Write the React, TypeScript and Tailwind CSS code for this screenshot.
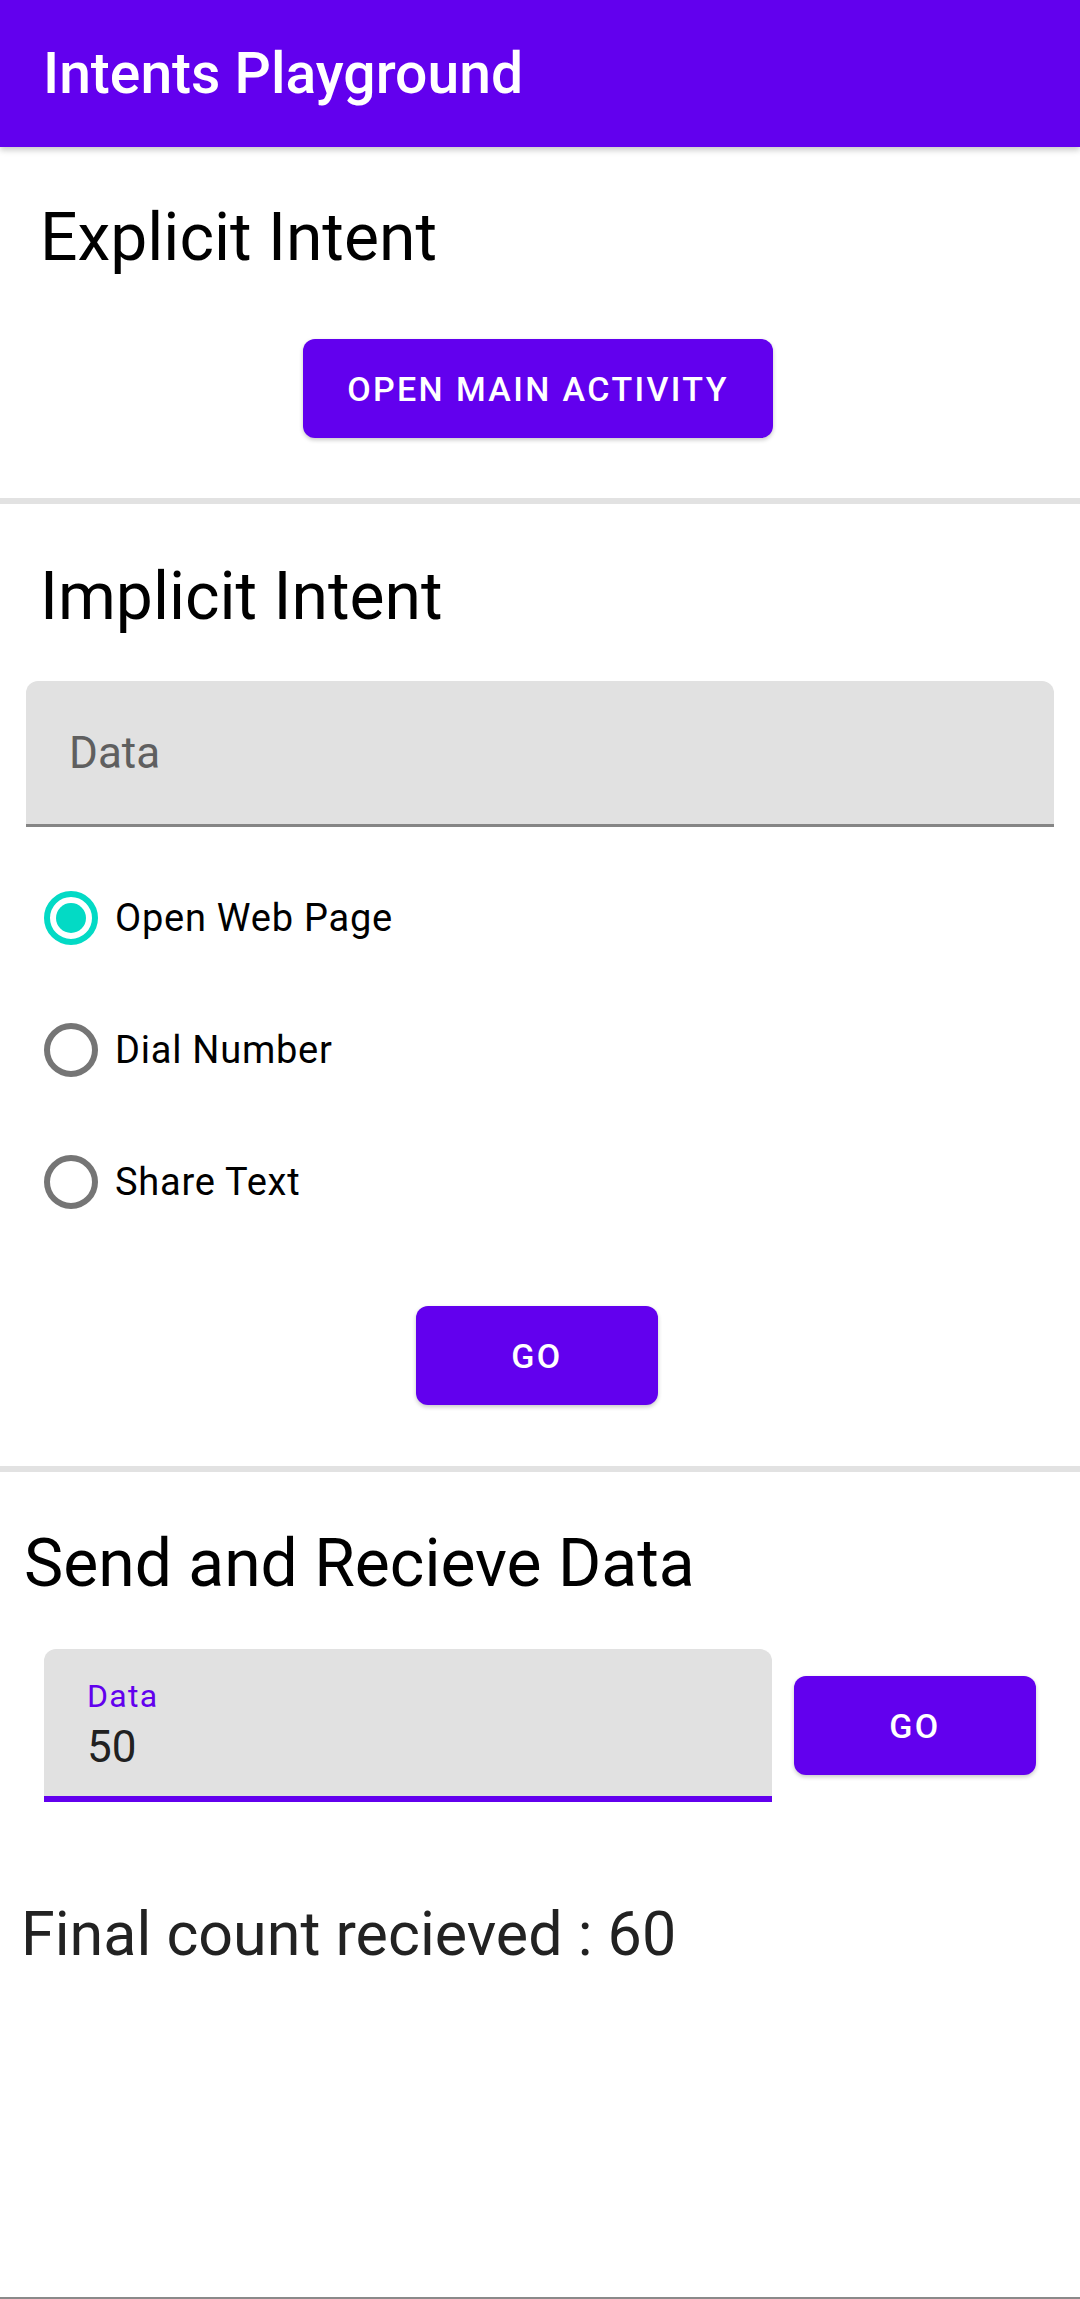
import React from "react";

const font = { fontFamily: "Roboto, 'Noto Sans', sans-serif" };

function Radio({ checked }: { checked: boolean }) {
  return (
    <svg width="54" height="54" viewBox="0 0 54 54" className="shrink-0">
      <circle
        cx="27"
        cy="27"
        r="24"
        fill="none"
        stroke={checked ? "#03dac5" : "#757575"}
        strokeWidth="6"
      />
      {checked && <circle cx="27" cy="27" r="15" fill="#03dac5" />}
    </svg>
  );
}

function PurpleButton({ label, className }: { label: string; className: string }) {
  return (
    <div
      className={
        "flex items-center justify-center rounded-[12px] bg-[#6200ee] text-white text-[34px] leading-[40px] font-medium tracking-[0.07em] shadow-[0_2px_4px_rgba(0,0,0,0.22)] " +
        className
      }
    >
      {label}
    </div>
  );
}

export default function App() {
  const radios = [
    { label: "Open Web Page", checked: true },
    { label: "Dial Number", checked: false },
    { label: "Share Text", checked: false },
  ];
  return (
    <div className="w-[1080px] h-[2299px] bg-white flex flex-col" style={font}>
      {/* App bar */}
      <div className="relative z-10 h-[147px] shrink-0 bg-[#6200ee] flex items-center pl-[43px] shadow-[0_3px_6px_rgba(0,0,0,0.22)]">
        <span className="text-white text-[57px] leading-[66px] font-medium">Intents Playground</span>
      </div>

      {/* Explicit */}
      <div className="pl-[40px] mt-[52px] text-[66px] leading-[78px] text-black">Explicit Intent</div>
      <div className="flex justify-center pr-[4px] mt-[62px]">
        <PurpleButton label="OPEN MAIN ACTIVITY" className="w-[470px] h-[99px]" />
      </div>

      <div className="mt-[60px] h-[6px] bg-[#e2e2e2]" />

      {/* Implicit */}
      <div className="pl-[40px] mt-[54px] text-[66px] leading-[78px] text-black">Implicit Intent</div>
      <div className="mx-[26px] mt-[45px] h-[146px] rounded-t-[12px] bg-[#e1e1e1] border-b-[3px] border-[#858585] flex items-center pl-[43px]">
        <span className="text-[44px] leading-[52px] text-[#5f5f5f]">Data</span>
      </div>

      <div className="mt-[25px] flex flex-col">
        {radios.map((r) => (
          <div key={r.label} className="h-[132px] flex items-center pl-[44px] gap-[17px]">
            <Radio checked={r.checked} />
            <span className="text-[38px] leading-[44px] tracking-[0.02em] text-black">{r.label}</span>
          </div>
        ))}
      </div>

      <div className="flex justify-center pr-[6px] mt-[58px]">
        <PurpleButton label="GO" className="w-[242px] h-[99px]" />
      </div>

      <div className="mt-[61px] h-[6px] bg-[#e2e2e2]" />

      {/* Send and receive */}
      <div className="pl-[24px] mt-[53px] text-[66px] leading-[78px] text-black">Send and Recieve Data</div>
      <div className="mt-[46px] px-[44px] flex items-center gap-[22px]">
        <div className="flex-1 h-[153px] rounded-t-[12px] bg-[#e1e1e1] border-b-[6px] border-[#6200ee] pt-[28px] pl-[43px] flex flex-col">
          <span className="text-[32px] leading-[38px] tracking-[0.04em] text-[#6200ee]">Data</span>
          <span className="mt-[6px] text-[44px] leading-[52px] text-[#212121]">50</span>
        </div>
        <PurpleButton label="GO" className="w-[242px] h-[99px] shrink-0" />
      </div>

      <div className="pl-[21px] mt-[97px] text-[61px] leading-[71px] text-[#222222]">Final count recieved : 60</div>

      <div className="mt-auto h-[2px] bg-[#8a8a8a]" />
    </div>
  );
}
